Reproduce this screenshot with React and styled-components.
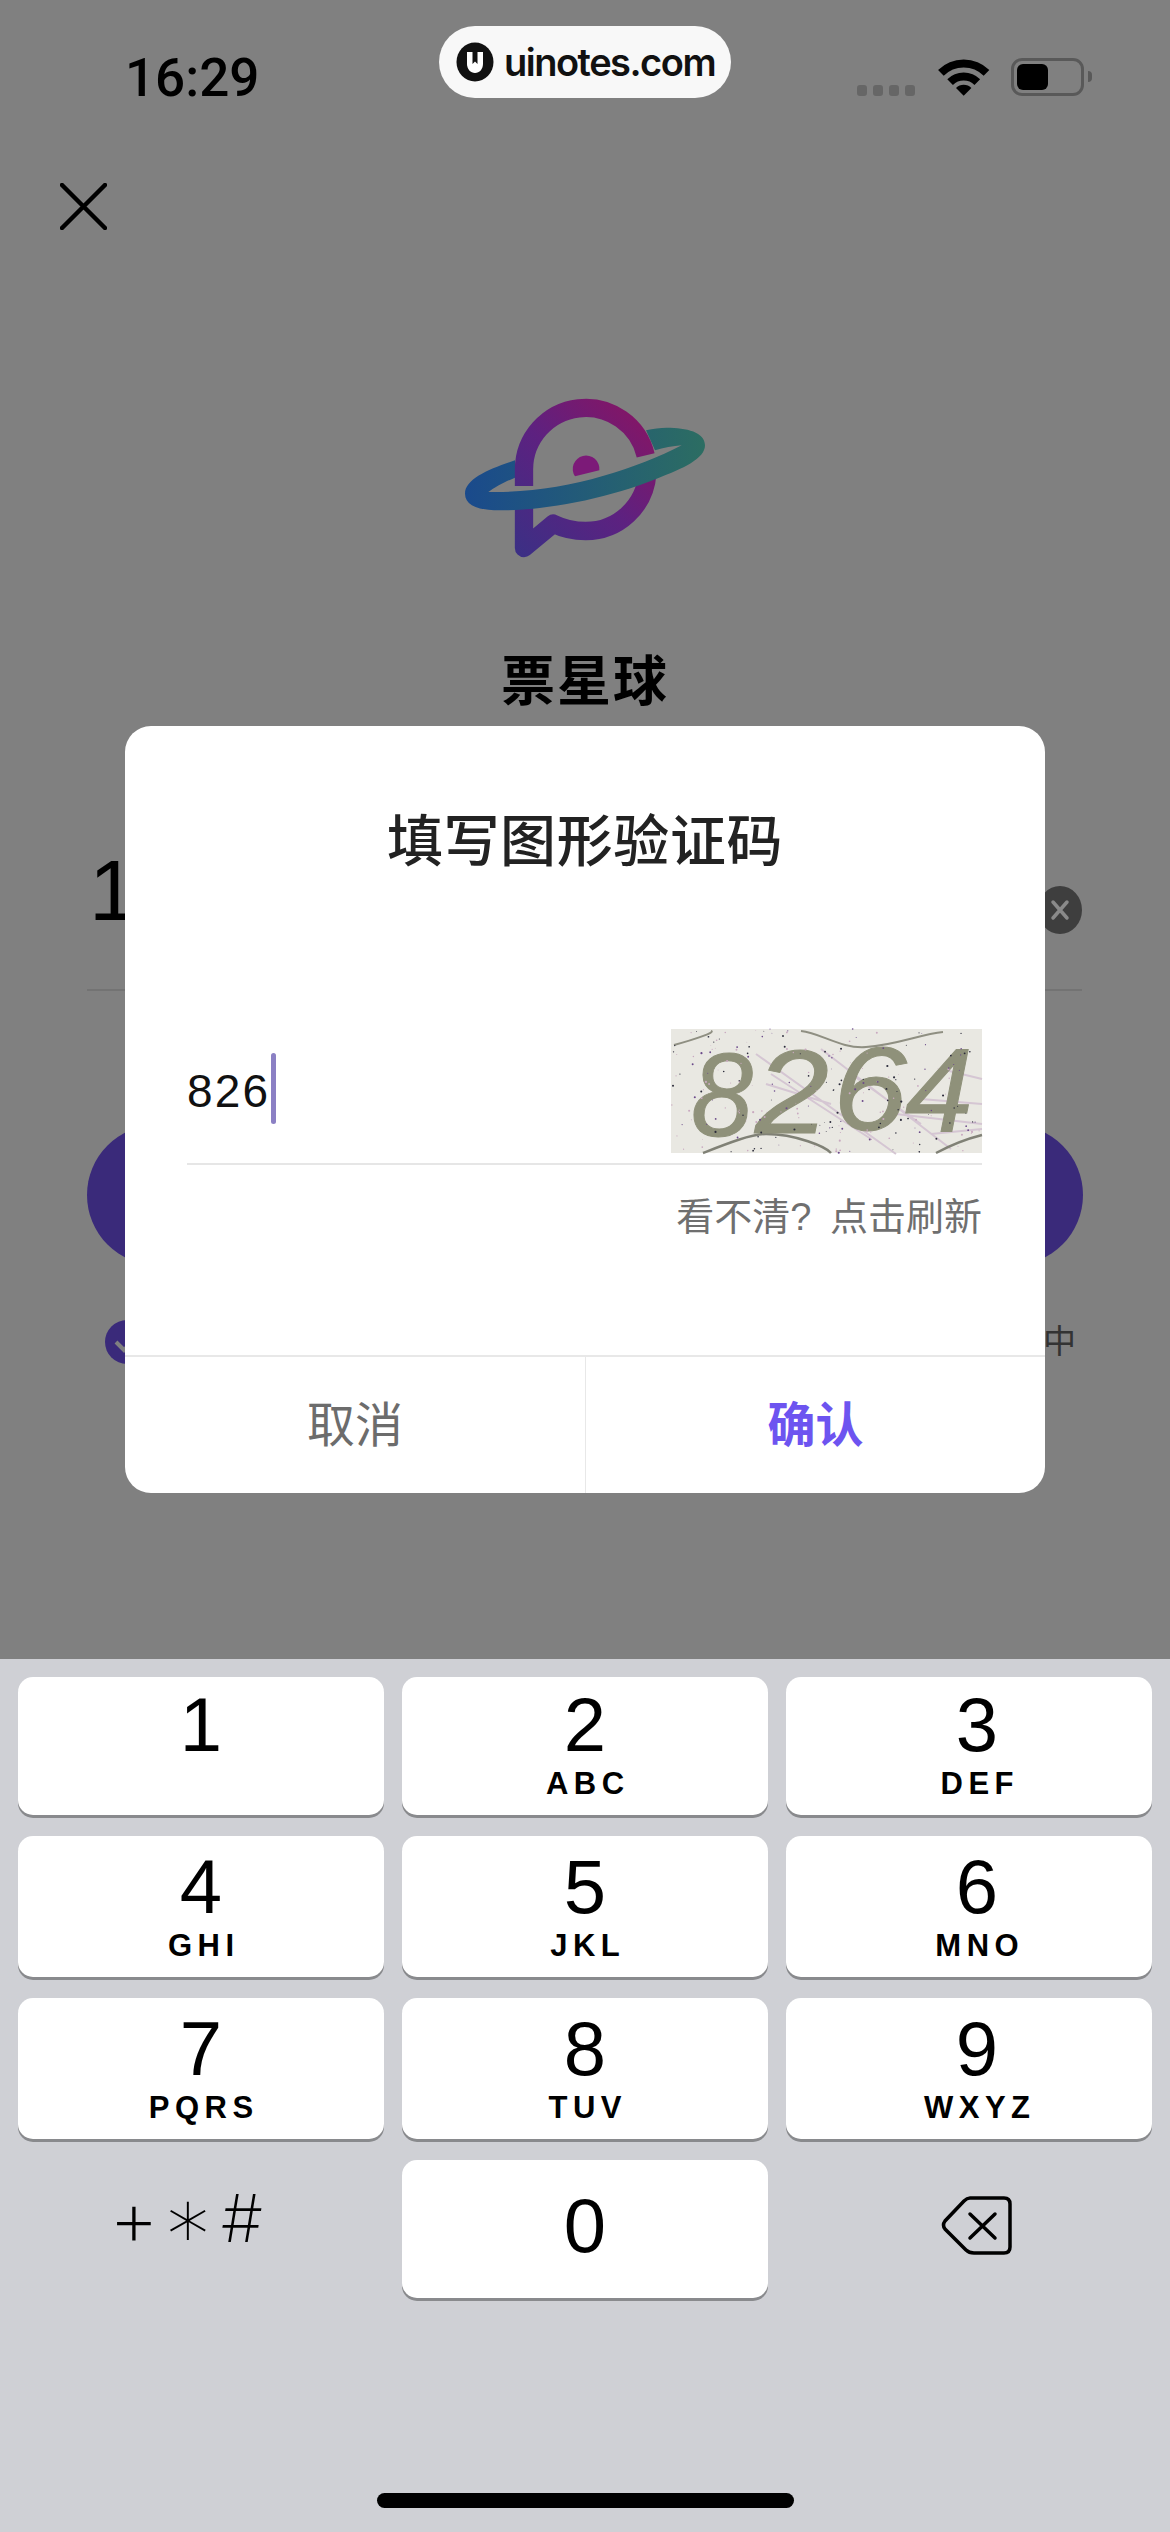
import React from 'react'
import styled, { createGlobalStyle } from 'styled-components'

const GlobalStyle = createGlobalStyle`
  html, body {
    margin: 0;
    padding: 0;
    background: #808080;
  }
  * {
    box-sizing: border-box;
  }
`

const latin = `"Liberation Sans", Arial, sans-serif`
const cjk = `"Liberation Sans", "Noto Sans CJK SC", sans-serif`

const Screen = styled.div`
  position: relative;
  width: 1170px;
  height: 2532px;
  display: flex;
  flex-direction: column;
  overflow: hidden;
  font-family: ${cjk};
`

const Page = styled.div`
  height: 1659px;
  background: #808080;
  display: flex;
  flex-direction: column;
`

const StatusBar = styled.div`
  display: flex;
  align-items: flex-start;
  height: 98px;
  padding: 26px 0 0 125px;
`

const Time = styled.div`
  width: 314px;
  margin-top: 24px;
  font: 500 53px/56px Roboto, sans-serif;
  color: #000;
`

const Pill = styled.div`
  width: 292px;
  height: 72px;
  display: flex;
  align-items: center;
  gap: 10px;
  padding-left: 17px;
  border-radius: 36px;
  background: #f8f8f8;
`

const PillText = styled.span`
  font: 600 38px/40px Inter, sans-serif;
  letter-spacing: -1.5px;
  color: #111;
`

const StatusIcons = styled.div`
  display: flex;
  align-items: flex-end;
  margin-left: 126px;
  margin-top: 32px;
  height: 38px;
`

const SignalDots = styled.div`
  display: flex;
  gap: 6px;
  margin-right: 17px;
`

const SignalDot = styled.span`
  width: 10px;
  height: 11px;
  border-radius: 3px;
  background: #666;
`

const WifiIcon = styled.svg`
  margin-bottom: -1px;
`

const Battery = styled.div`
  width: 73px;
  height: 38px;
  margin-left: 19px;
  padding: 3px;
  border: 3px solid #595959;
  border-radius: 11px;
`

const BatteryFill = styled.div`
  width: 31px;
  height: 26px;
  border-radius: 6px;
  background: #000;
`

const BatteryKnob = styled.span`
  width: 4px;
  height: 11px;
  margin: 0 0 14px 4px;
  border-radius: 0 4px 4px 0;
  background: #595959;
`

const CloseIcon = styled.svg`
  display: block;
  margin: 85px 0 0 60px;
`

const Logo = styled.svg`
  display: block;
  margin: 168px auto 0;
`

const AppName = styled.div`
  margin-top: 94px;
  text-align: center;
  font-size: 54px;
  line-height: 60px;
  font-weight: 700;
  letter-spacing: 2px;
  color: #000;
`

const PhoneRow = styled.div`
  height: 144px;
  margin: 135px 88px 0 87px;
  display: flex;
  justify-content: space-between;
  align-items: flex-start;
  border-bottom: 2px solid #737373;
`

const PhoneValue = styled.span`
  margin-left: 2px;
  font: 400 86px/86px ${latin};
  color: #000;
`

const ClearIcon = styled.svg`
  margin-top: 39px;
`

const LoginButton = styled.div`
  height: 140px;
  margin: 134px 87px 0;
  border-radius: 70px;
  background: #3a2a7a;
`

const Agreement = styled.div`
  display: flex;
  justify-content: space-between;
  align-items: center;
  margin-top: 55px;
  padding: 0 94px 0 105px;
`

const AgreementText = styled.span`
  font-size: 33px;
  line-height: 44px;
  color: #333;
`

const Dialog = styled.div`
  position: absolute;
  left: 125px;
  top: 726px;
  width: 920px;
  height: 767px;
  display: flex;
  flex-direction: column;
  padding-top: 80px;
  border-radius: 26px;
  background: #fff;
`

const DialogTitle = styled.div`
  text-align: center;
  font-size: 56px;
  line-height: 72px;
  font-weight: 500;
  letter-spacing: 0.6px;
  color: #222;
`

const CodeRow = styled.div`
  display: flex;
  align-items: center;
  margin: 151px 63px 0 62px;
  padding-bottom: 10px;
  border-bottom: 2px solid #e6e6e6;
`

const CodeValue = styled.span`
  font: 400 46px/60px ${latin};
  letter-spacing: 2.2px;
  color: #111;
`

const Caret = styled.span`
  width: 5px;
  height: 71px;
  margin: -6px auto 0 1px;
  border-radius: 3px;
  background: #8b80c4;
`

const Captcha = styled.svg`
  display: block;
  overflow: visible;
  background: #e9e8e2;
`

const CaptchaDigit = styled.text`
  font: italic 400 118px ${latin};
  fill: #8f917a;
  stroke: #8f917a;
  stroke-width: 1px;
`

const RefreshHint = styled.div`
  margin: 28px 63px 0 0;
  text-align: right;
  font-size: 38px;
  line-height: 48px;
  word-spacing: 8px;
  color: #6f6f6f;
`

const DialogFooter = styled.div`
  margin-top: auto;
  height: 138px;
  display: grid;
  grid-template-columns: 1fr 1fr;
  border-top: 2px solid #e8e8e8;
`

const FooterButton = styled.div`
  display: flex;
  align-items: center;
  justify-content: center;
  padding-bottom: 8px;
  font-size: 48px;
  font-weight: ${p => (p.$primary ? 700 : 400)};
  color: ${p => (p.$primary ? '#6d54f0' : '#6c6c6c')};
  & + & {
    border-left: 1px solid #e8e8e8;
  }
`

const Keyboard = styled.div`
  flex: 1;
  display: flex;
  flex-direction: column;
  padding: 18px 18px 0;
  background: #cfd0d5;
`

const KeyGrid = styled.div`
  display: grid;
  grid-template-columns: repeat(3, 366px);
  grid-template-rows: 138px 141px 141px 138px;
  column-gap: 18px;
  row-gap: 21px;
`

const Key = styled.div`
  display: flex;
  flex-direction: column;
  align-items: center;
  padding-top: ${p => p.$pad}px;
  padding-left: ${p => p.$shift || 0}px;
  border-radius: 15px;
  background: #fff;
  box-shadow: 0 3px 0 #898a8d;
  color: #000;
`

const Digit = styled.span`
  font: 400 76px/76px ${latin};
`

const Letters = styled.span`
  margin: 5px -5.5px 0 0;
  font: 700 31px/31px ${latin};
  letter-spacing: 5.5px;
`

const SideKey = styled.div`
  display: flex;
  justify-content: center;
  align-items: flex-start;
`

const Symbols = styled.div`
  display: flex;
  margin: 24px 26px 0 0;
  color: #000;
`

const Symbol = styled.span`
  width: 54px;
  height: 68px;
  display: flex;
  justify-content: center;
  align-items: center;
  font: 200 ${p => p.$size}px/68px ${p => p.$font || 'Inter'}, sans-serif;
`

const BackspaceIcon = styled.svg`
  margin: 20px 0 0 12px;
`

const HomeBar = styled.div`
  width: 417px;
  height: 15px;
  margin: 195px auto 0;
  border-radius: 8px;
  background: #000;
`

const keys = [
  ['1', ''],
  ['2', 'ABC'],
  ['3', 'DEF'],
  ['4', 'GHI'],
  ['5', 'JKL'],
  ['6', 'MNO'],
  ['7', 'PQRS'],
  ['8', 'TUV'],
  ['9', 'WXYZ'],
]

// captcha noise, seeded so that it stays the same on every render
let seed = 8264
const rand = () => {
  seed = (seed * 16807) % 2147483647
  return seed / 2147483647
}
const noise = Array.from({ length: 230 }, () => ({
  x: rand() * 311,
  y: rand() * 124,
  r: 0.4 + rand() * 0.7,
  c: rand() > 0.75 ? '#6b4a8a' : rand() > 0.5 ? '#c9a9c0' : '#2a2a3a',
}))

const PillLogo = () => (
  <svg width="38" height="40" viewBox="0 0 38 40">
    <ellipse cx="19" cy="20" rx="18.5" ry="19.5" fill="#111" />
    <path d="M11 10h16v12c0 5-3.500 9-8 9s-8-4-8-9z" fill="#fff" />
    <path d="M16.500 10h5v12l-2.500-2.500-2.500 2.500z" fill="#111" />
  </svg>
)

const Wifi = () => (
  <WifiIcon width="60" height="42" viewBox="0 0 60 42">
    <path d="M8.900 17.900A32.300 32.300 0 0 1 54.500 17.900M18.100 27.100A19.300 19.300 0 0 1 45.300 27.100" fill="none" stroke="#000" strokeWidth="8" />
    <path d="M31.700 40.700L24 33A11 11 0 0 1 39.400 33Z" fill="#000" />
  </WifiIcon>
)

const PlanetLogo = () => (
  <Logo width="240" height="160" viewBox="195 83 720 480">
    <defs>
      <linearGradient id="bubble" gradientUnits="userSpaceOnUse" x1="345" y1="560" x2="770" y2="120">
        <stop offset="0" stopColor="#3a3085" />
        <stop offset="0.5" stopColor="#5d2180" />
        <stop offset="1" stopColor="#8a1462" />
      </linearGradient>
      <linearGradient id="ring" x1="0" y1="0" x2="1" y2="0">
        <stop offset="0" stopColor="#1a4a8c" />
        <stop offset="1" stopColor="#2c6d62" />
      </linearGradient>
    </defs>
    <path
      d="M372 400V533L460 460Q505 482 557 482A185 185 0 0 0 742 310"
      fill="none"
      stroke="url(#bubble)"
      strokeWidth="55"
      strokeLinejoin="round"
    />
    <path
      d="M345 270C270 295 195 325 195 370C195 405 235 420 300 420C440 420 620 385 770 325C850 295 915 265 915 225C915 185 860 172 800 172C780 172 760 175 738 180L765 240C790 232 820 228 845 225C700 300 480 370 265 365C285 350 320 332 345 322Z"
      fill="url(#ring)"
    />
    <path d="M372 347V297A185 185 0 0 1 737 255" fill="none" stroke="url(#bubble)" strokeWidth="55" />
    <path d="M525 318A40 40 0 1 1 598 300Z" fill="#7c1a78" />
  </Logo>
)

const CaptchaImage = () => (
  <Captcha width="311" height="124" viewBox="0 0 311 124">
    <g fill="none" stroke="#d5c6d3" strokeWidth="2">
      <path d="M85 25L225 125M100 45L200 110M95 55L160 75M150 20L280 120M180 45L250 95" />
      <path d="M225 85L311 95M250 70L311 75M270 40L311 50M260 105L311 100" />
    </g>
    <g fill="none" stroke="#8f8f82" strokeWidth="2">
      <path d="M3 16C25 10 45 3 40 2M130 2C150 4 170 20 195 18C225 16 250 5 272 3" />
    </g>
    <g fill="none" stroke="#808176" strokeWidth="2.500">
      <path d="M32 124C55 115 80 105 95 105C125 105 155 118 160 124M265 124C280 116 295 110 311 106" />
    </g>
    <CaptchaDigit x="20" y="107" textLength="62" lengthAdjust="spacingAndGlyphs">8</CaptchaDigit>
    <CaptchaDigit x="84" y="104" textLength="74" lengthAdjust="spacingAndGlyphs">2</CaptchaDigit>
    <CaptchaDigit x="162" y="101" textLength="74" lengthAdjust="spacingAndGlyphs">6</CaptchaDigit>
    <CaptchaDigit x="234" y="103" textLength="68" lengthAdjust="spacingAndGlyphs">4</CaptchaDigit>
    {noise.map((d, i) => (
      <circle key={i} cx={d.x} cy={d.y} r={d.r} fill={d.c} />
    ))}
  </Captcha>
)

export default function App() {
  return (
    <Screen>
      <GlobalStyle />
      <Page>
        <StatusBar>
          <Time>16:29</Time>
          <Pill>
            <PillLogo />
            <PillText>uinotes.com</PillText>
          </Pill>
          <StatusIcons>
            <SignalDots>
              <SignalDot />
              <SignalDot />
              <SignalDot />
              <SignalDot />
            </SignalDots>
            <Wifi />
            <Battery>
              <BatteryFill />
            </Battery>
            <BatteryKnob />
          </StatusIcons>
        </StatusBar>
        <CloseIcon width="47" height="47" viewBox="0 0 47 47">
          <path d="M2 2L45 45M45 2L2 45" stroke="#000" strokeWidth="4.5" strokeLinecap="round" />
        </CloseIcon>
        <PlanetLogo />
        <AppName>票星球</AppName>
        <PhoneRow>
          <PhoneValue>1</PhoneValue>
          <ClearIcon width="44" height="48" viewBox="0 0 44 48">
            <ellipse cx="22" cy="24" rx="22" ry="24" fill="#3e3e3e" />
            <path d="M15 16L29 32M29 16L15 32" stroke="#8a8a8a" strokeWidth="3.500" strokeLinecap="round" />
          </ClearIcon>
        </PhoneRow>
        <LoginButton />
        <Agreement>
          <svg width="44" height="44" viewBox="0 0 44 44">
            <circle cx="22" cy="22" r="22" fill="#3a2a7a" />
            <path d="M11 22L19 30L33 15" fill="none" stroke="#808080" strokeWidth="4" />
          </svg>
          <AgreementText>中</AgreementText>
        </Agreement>
      </Page>

      <Dialog>
        <DialogTitle>填写图形验证码</DialogTitle>
        <CodeRow>
          <CodeValue>826</CodeValue>
          <Caret />
          <CaptchaImage />
        </CodeRow>
        <RefreshHint>看不清? 点击刷新</RefreshHint>
        <DialogFooter>
          <FooterButton>取消</FooterButton>
          <FooterButton $primary>确认</FooterButton>
        </DialogFooter>
      </Dialog>

      <Keyboard>
        <KeyGrid>
          {keys.map(([digit, letters], i) => (
            <Key key={digit} $pad={i < 3 ? 10 : 13} $shift={i % 3 === 2 ? 16 : 0}>
              <Digit>{digit}</Digit>
              {letters && <Letters>{letters}</Letters>}
            </Key>
          ))}
          <SideKey>
            <Symbols>
              <Symbol $size={78}>+</Symbol>
              <Symbol $size={84} $font="DejaVu Sans">∗</Symbol>
              <Symbol $size={66}>#</Symbol>
            </Symbols>
          </SideKey>
          <Key $pad={28}>
            <Digit>0</Digit>
          </Key>
          <SideKey>
            <BackspaceIcon width="110" height="90" viewBox="0 0 110 90">
              <path
                d="M50 18H84Q90 18 90 24V67Q90 73 84 73H54Q49 73 46 70L25 49Q22 45 25 41L44 21Q47 18 50 18Z"
                fill="none"
                stroke="#000"
                strokeWidth="3.500"
              />
              <path d="M50 34L75 58M75 34L50 58" stroke="#000" strokeWidth="3.500" strokeLinecap="round" />
            </BackspaceIcon>
          </SideKey>
        </KeyGrid>
        <HomeBar />
      </Keyboard>
    </Screen>
  )
}
